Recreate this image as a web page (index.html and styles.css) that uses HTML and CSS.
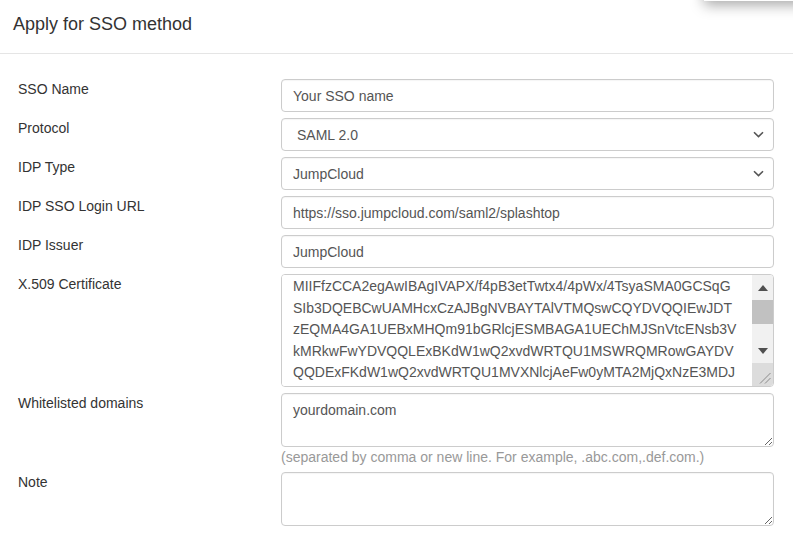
FILE: index.html
```html
<!DOCTYPE html>
<html lang="en">
<head>
  <meta charset="UTF-8" />
  <meta name="viewport" content="width=device-width, initial-scale=1.0"/>
  <title>Apply for SSO method</title>
  <link rel="stylesheet" href="styles.css">
</head>
<body>
  <div class="menu-peek"></div>

  <div class="modal-header">
    <h4 class="modal-title">Apply for SSO method</h4>
  </div>

  <form class="sso-form">
    <div class="form-row">
      <label for="ssoName">SSO Name</label>
      <input type="text" id="ssoName" class="field" placeholder="Your SSO name" />
    </div>

    <div class="form-row">
      <label for="protocol">Protocol</label>
      <select id="protocol" class="field field-select field-select--indent">
        <option>SAML 2.0</option>
      </select>
    </div>

    <div class="form-row">
      <label for="idpType">IDP Type</label>
      <select id="idpType" class="field field-select">
        <option>JumpCloud</option>
        <option>Okta</option>
        <option>Azure AD</option>
      </select>
    </div>

    <div class="form-row">
      <label for="loginUrl">IDP SSO Login URL</label>
      <input type="text" id="loginUrl" class="field" value="https://sso.jumpcloud.com/saml2/splashtop" />
    </div>

    <div class="form-row">
      <label for="issuer">IDP Issuer</label>
      <input type="text" id="issuer" class="field" value="JumpCloud" />
    </div>

    <div class="form-row">
      <label for="cert">X.509 Certificate</label>
      <div class="cert-box">
        <textarea id="cert" class="cert" wrap="off">MIIFfzCCA2egAwIBAgIVAPX/f4pB3etTwtx4/4pWx/4TsyaSMA0GCSqG
SIb3DQEBCwUAMHcxCzAJBgNVBAYTAlVTMQswCQYDVQQIEwJDT
zEQMA4GA1UEBxMHQm91bGRlcjESMBAGA1UEChMJSnVtcENsb3V
kMRkwFwYDVQQLExBKdW1wQ2xvdWRTQU1MSWRQMRowGAYDV
QQDExFKdW1wQ2xvdWRTQU1MVXNlcjAeFw0yMTA2MjQxNzE3MDJ
aFw0yNjA2MjQxNzE3MDJaMHcxCzAJBgNVBAYTAlVTMQswCQYDV
QQIEwJDTzEQMA4GA1UEBxMHQm91bGRlcjESMBAGA1UEChMJSnVt
cENsb3VkMRkwFwYDVQQLExBKdW1wQ2xvdWRTQU1MSWRQMRowGAY
DVQQDExFKdW1wQ2xvdWRTQU1MVXNlcjCCASIwDQYJKoZIhvcNAQEB</textarea>
        <!-- classic scrollbar for the certificate box -->
        <div class="scrollbar">
          <span class="scroll-btn">
            <svg width="10" height="6" viewBox="0 0 10 6"><path d="M0 6 L5 0 L10 6 Z" fill="#505050"/></svg>
          </span>
          <div class="scroll-track"><div class="scroll-thumb"></div></div>
          <span class="scroll-btn">
            <svg width="10" height="6" viewBox="0 0 10 6"><path d="M0 0 L5 6 L10 0 Z" fill="#505050"/></svg>
          </span>
          <span class="resize-grip">
            <svg width="21" height="23" viewBox="0 0 21 23"><path d="M8 20.5 L18.5 10 M13 20.5 L18.5 15" stroke="#8a8a8a" stroke-width="1"/></svg>
          </span>
        </div>
      </div>
    </div>

    <div class="form-row">
      <label for="domains">Whitelisted domains</label>
      <div class="field-group">
        <textarea id="domains" class="field field-area">yourdomain.com</textarea>
        <p class="help-text">(separated by comma or new line. For example, .abc.com,.def.com.)</p>
      </div>
    </div>

    <div class="form-row">
      <label for="note">Note</label>
      <textarea id="note" class="field field-area"></textarea>
    </div>
  </form>
</body>
</html>
```

FILE: styles.css
```css
body {
  margin: 0;
  background-color: #fff;
  color: #333;
  font-family: 'Liberation Sans', Arial, sans-serif;
  font-size: 14px;
  overflow: hidden;
}

/* dropdown from the top bar, only its bottom edge shows */
.menu-peek {
  position: absolute;
  top: -30px;
  left: 704px;
  width: 110px;
  height: 31px;
  background-color: #fff;
  box-shadow: 0 4px 14px rgba(0, 0, 0, 0.35);
}

.modal-header {
  height: 53px;
  border-bottom: 1px solid #e5e5e5;
  padding: 0 13px;
  display: flex;
  align-items: center;
}

.modal-title {
  margin: 0 0 4px;
  font-size: 18px;
  font-weight: normal;
  color: #333;
}

.sso-form {
  padding: 25px 19px 0 18px;
}

.form-row {
  display: grid;
  grid-template-columns: 263px 1fr;
  align-items: start;
  margin-bottom: 6px;
}

.form-row label {
  line-height: 20px;
  color: #333;
}

.field {
  display: block;
  box-sizing: border-box;
  width: 100%;
  height: 33px;
  margin: 0;
  padding: 6px 11px;
  font-family: inherit;
  font-size: 14px;
  color: #555;
  background-color: #fff;
  border: 1px solid #ccc;
  border-radius: 4px;
  box-shadow: inset 0 1px 1px rgba(0, 0, 0, 0.04);
  outline: none;
}

.field::placeholder {
  color: #555;
}

.field-select {
  appearance: none;
  -webkit-appearance: none;
  background-image: url("data:image/svg+xml;utf8,<svg xmlns='http://www.w3.org/2000/svg' width='11' height='7' viewBox='0 0 11 7'><path d='M1 1.2 L5.5 5.6 L10 1.2' fill='none' stroke='%23555' stroke-width='1.6'/></svg>");
  background-repeat: no-repeat;
  background-position: right 9px center;
  padding-right: 30px;
}

.field-select--indent {
  padding-left: 15px;
}

.field-area {
  height: 54px;
  resize: vertical;
  line-height: 20px;
}

.cert-box {
  display: flex;
  box-sizing: border-box;
  height: 113px;
  border: 1px solid #ccc;
  border-radius: 4px;
  overflow: hidden;
}

.cert {
  flex: 1;
  min-width: 0;
  margin: 0;
  padding: 1px 11px 0;
  border: none;
  outline: none;
  resize: none;
  font-family: inherit;
  font-size: 14px;
  line-height: 21.6px;
  color: #555;
  white-space: pre;
  overflow: hidden;
}

.scrollbar {
  width: 21px;
  display: flex;
  flex-direction: column;
  background-color: #f1f1f1;
}

.scroll-btn {
  height: 25px;
  display: flex;
  align-items: center;
  justify-content: center;
}

.scroll-track {
  flex: 1;
  padding-top: 0;
}

.scroll-thumb {
  height: 24px;
  background-color: #c1c1c1;
}

.resize-grip {
  height: 23px;
  display: block;
  background-color: #dcdcdc;
}

.resize-grip svg {
  display: block;
}

.field-group {
  min-width: 0;
}

.help-text {
  margin: 0;
  padding-top: 1px;
  line-height: 18px;
  color: #999;
}
```
